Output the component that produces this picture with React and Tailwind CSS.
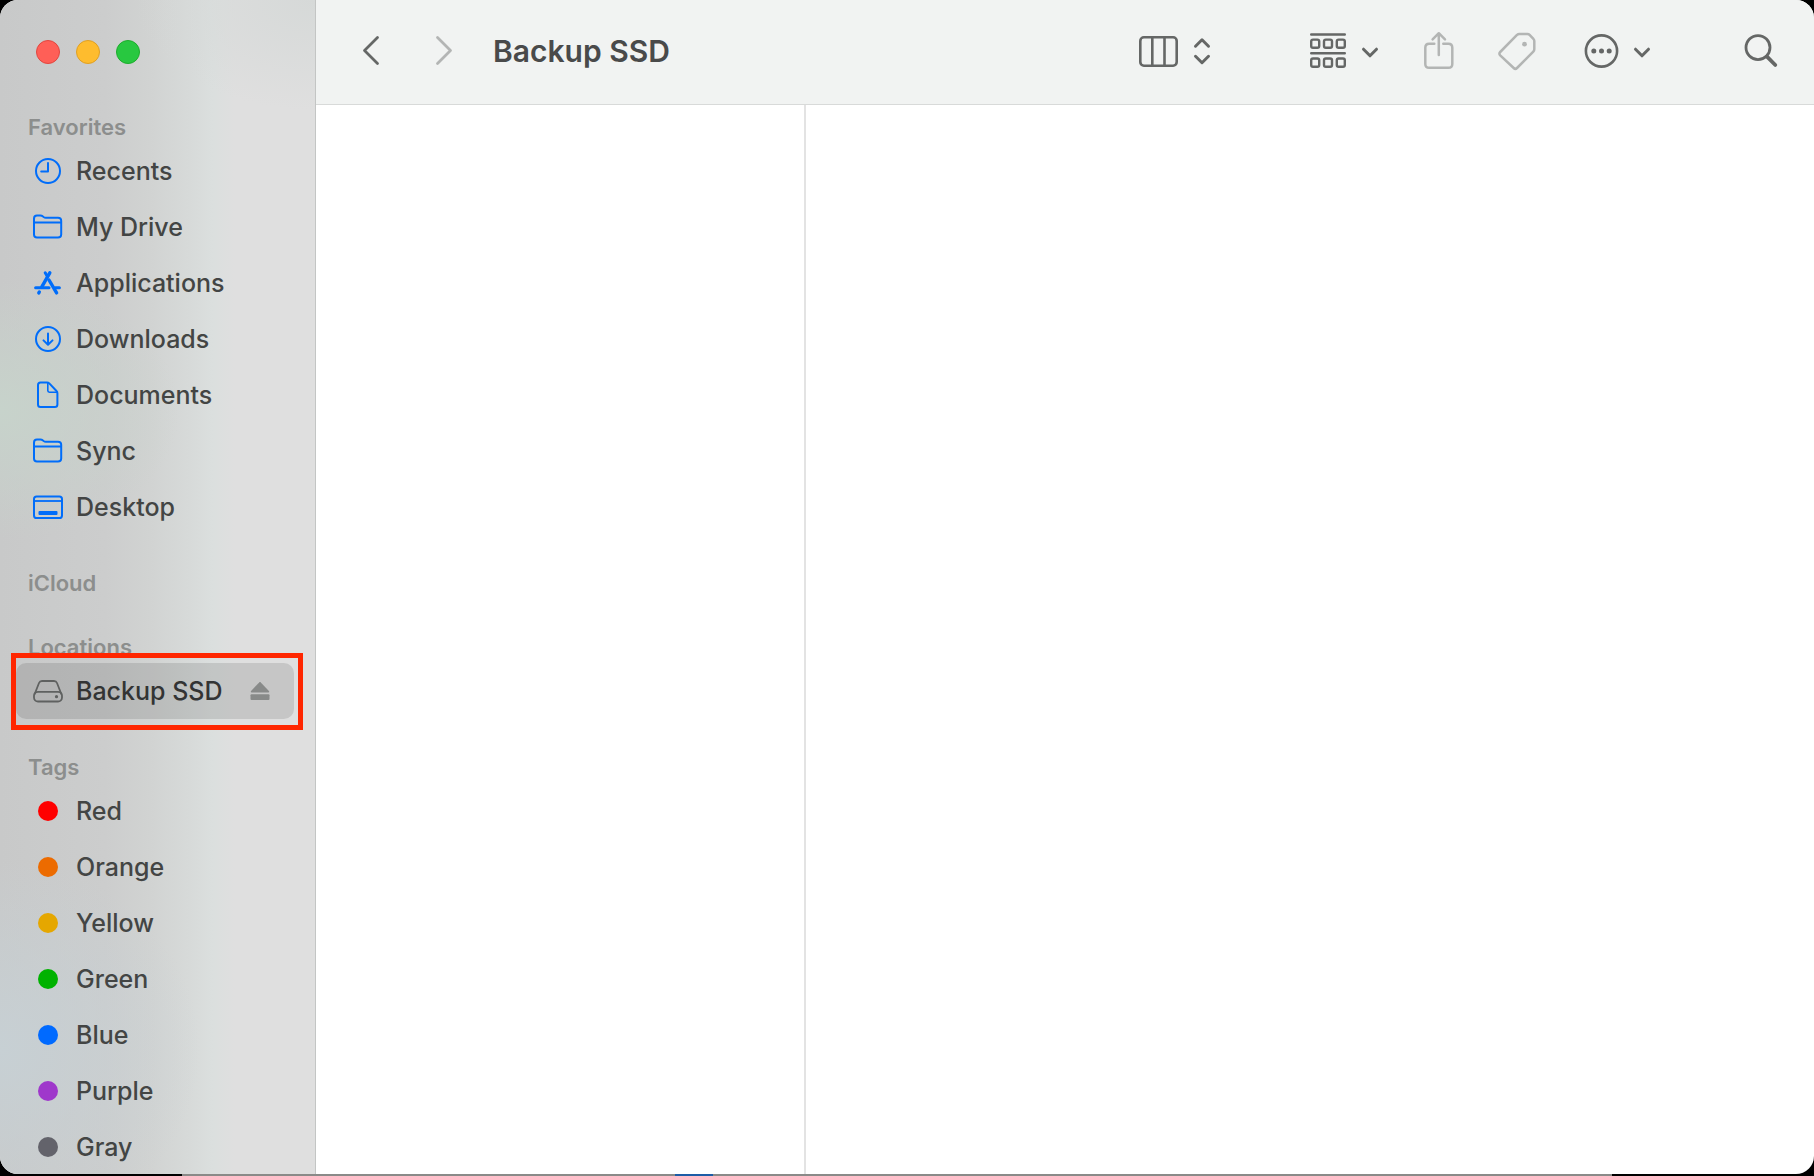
import clsx from 'clsx';

const RecentsIcon = () => (
  <svg width="32" height="32" viewBox="0 0 32 32" fill="none" stroke="currentColor" strokeWidth="2" strokeLinecap="round" strokeLinejoin="round">
    <circle cx="16" cy="16" r="12" />
    <path d="M16 8v8.4H9.2" />
  </svg>
);

const FolderIcon = () => (
  <svg width="32" height="32" viewBox="0 0 32 32" fill="none" stroke="currentColor" strokeWidth="2" strokeLinejoin="round">
    <path d="M2 23.500V7.700C2 5.500 3 4.500 5 4.500h3.400c1 0 1.600.2 2.300.8l.9.700c.7.500 1.200.700 2.200.700h12.200c2.200 0 3.200 1 3.200 3V23.500c0 2-1 3-3.200 3H5c-2 0-3-1-3-3z" />
    <path d="M2 11.500h27.200" />
  </svg>
);

const AppsIcon = () => (
  <svg width="32" height="32" viewBox="0 0 32 32" fill="none" stroke="currentColor" strokeWidth="3" strokeLinecap="round">
    <path d="M13.200 5.800l1.800 3" />
    <path d="M17.800 5.800L9.800 19.800" strokeWidth="3.400" />
    <path d="M3.600 20.700h13.400" />
    <path d="M23.400 20.700h4" />
    <path d="M7.300 25l-.5.900" strokeWidth="3.400" />
    <path d="M17 13l7.600 12.900" strokeWidth="3.400" />
  </svg>
);

const DownloadsIcon = () => (
  <svg width="32" height="32" viewBox="0 0 32 32" fill="none" stroke="currentColor" strokeWidth="2" strokeLinecap="round" strokeLinejoin="round">
    <circle cx="16" cy="16" r="12" />
    <path d="M16 10.500v11M11.500 17.400l4.500 4.300 4.500-4.300" />
  </svg>
);

const DocumentIcon = () => (
  <svg width="32" height="32" viewBox="0 0 32 32" fill="none" stroke="currentColor" strokeWidth="2" strokeLinejoin="round">
    <path d="M6 6c0-1.700.8-2.500 2.500-2.500H15c1 0 1.600.2 2.300.9l7.200 7.600c.7.700.9 1.300.9 2.200V25.500c0 1.700-.9 2.500-2.600 2.500H8.500C6.800 28 6 27.200 6 25.500z" />
    <path d="M15.800 4v7.600c0 1.100.6 1.600 1.600 1.600h7.600" strokeWidth="1.600" />
  </svg>
);

const DesktopIcon = () => (
  <svg width="32" height="32" viewBox="0 0 32 32" fill="none" stroke="currentColor" strokeWidth="2">
    <rect x="2" y="5.500" width="28" height="21.500" rx="2.600" />
    <path d="M2 10h28" strokeWidth="1.800" />
    <rect x="6.500" y="20" width="19" height="4" rx="1" fill="currentColor" stroke="none" />
  </svg>
);

const DriveIcon = () => (
  <svg width="32" height="32" viewBox="0 0 32 32" fill="none" stroke="currentColor" strokeWidth="1.800" strokeLinejoin="round">
    <path d="M2.500 19.500L7 8c.6-1.500 1.500-2 3-2h12c1.500 0 2.400.5 3 2l4.500 11.500" />
    <rect x="2" y="16.800" width="28" height="9.700" rx="4" />
    <circle cx="24.500" cy="21.700" r="1.600" fill="currentColor" stroke="none" />
  </svg>
);

const EjectIcon = () => (
  <svg width="20" height="20" viewBox="0 0 20 20" fill="currentColor">
    <path d="M9.200 1.400c.5-.5 1.100-.5 1.600 0l8.100 8.500c.6.700.4 1.500-.6 1.500H1.700c-1 0-1.200-.8-.6-1.500z" />
    <rect x=".5" y="13.200" width="19" height="5.800" rx="1" />
  </svg>
);

const ChevronDown = () => (
  <svg width="18" height="36" viewBox="0 0 18 36" fill="none" stroke="currentColor" strokeWidth="3" strokeLinecap="round" strokeLinejoin="round">
    <path d="M2.500 16.200l6.500 6.600 6.500-6.600" />
  </svg>
);

const favorites = [
  { name: 'Recents', icon: RecentsIcon },
  { name: 'My Drive', icon: FolderIcon },
  { name: 'Applications', icon: AppsIcon },
  { name: 'Downloads', icon: DownloadsIcon },
  { name: 'Documents', icon: DocumentIcon },
  { name: 'Sync', icon: FolderIcon },
  { name: 'Desktop', icon: DesktopIcon },
];

const tags = [
  { name: 'Red', color: 'bg-[#ff0000]' },
  { name: 'Orange', color: 'bg-[#ec6b00]' },
  { name: 'Yellow', color: 'bg-[#e5a700]' },
  { name: 'Green', color: 'bg-[#00b200]' },
  { name: 'Blue', color: 'bg-[#006aff]' },
  { name: 'Purple', color: 'bg-[#9f38cb]' },
  { name: 'Gray', color: 'bg-[#63636b]' },
];

function SectionTitle({ children }) {
  return (
    <h2 className="flex h-[34px] items-center pt-0.5 pl-7 text-[22px] font-semibold text-[#8c8e8d]">
      {children}
    </h2>
  );
}

function SidebarLink({ label, children }) {
  return (
    <a href="#" className="flex h-14 items-center gap-3 pl-4 text-[25px] font-medium text-[#434544]">
      <span className="flex w-8 justify-center text-[#006dfa]">{children}</span>
      <span className="pt-0.5">{label}</span>
    </a>
  );
}

function Sidebar() {
  return (
    <aside className="flex w-[316px] shrink-0 flex-col overflow-hidden border-r border-[#c3c5c4] bg-[radial-gradient(ellipse_180px_130px_at_0px_410px,#c7d3cb,transparent),radial-gradient(ellipse_200px_190px_at_0px_1050px,#c7d0d4,transparent),radial-gradient(ellipse_180px_110px_at_315px_0px,#d6d9d8,transparent),linear-gradient(to_right,#c8c9c9_0px,#cccdcd_105px,#d1d3d2_150px,#d7dad9_190px,#dbdfde_213px,#dfdfdf_235px)]">
      <div className="flex h-[104px] shrink-0 items-center gap-4 pl-9">
        <button aria-label="Close" className="size-6 rounded-full border border-[#e2463f] bg-[#ff5f57]" />
        <button aria-label="Minimize" className="size-6 rounded-full border border-[#e0a023] bg-[#febc2e]" />
        <button aria-label="Zoom" className="size-6 rounded-full border border-[#1dad2c] bg-[#28c840]" />
      </div>

      <nav className="flex flex-col gap-[30px] pt-[5px]">
        <section>
          <SectionTitle>Favorites</SectionTitle>
          <div className="mx-4">
            {favorites.map(({ name, icon: Icon }) => (
              <SidebarLink key={name} label={name}>
                <Icon />
              </SidebarLink>
            ))}
          </div>
        </section>

        <section>
          <SectionTitle>iCloud</SectionTitle>
        </section>

        <section>
          <SectionTitle>Locations</SectionTitle>
          <div className="relative mr-[21px] ml-4 flex h-14 items-center rounded-[10px] bg-black/11">
            <a href="#" className="flex flex-1 items-center gap-3 pl-4 text-[25px] font-medium text-[#333434]">
              <span className="w-8 text-[#5f6160]">
                <DriveIcon />
              </span>
              <span className="pt-0.5">Backup SSD</span>
            </a>
            <button aria-label="Eject Backup SSD" className="mr-6 text-[#888a89]">
              <EjectIcon />
            </button>
            {/* Highlight frame */}
            <div className="pointer-events-none absolute -top-2.5 -right-[9px] -bottom-[11px] -left-[5px] border-[5px] border-[#ff2600]" />
          </div>
        </section>

        <section>
          <SectionTitle>Tags</SectionTitle>
          <div className="mx-4">
            {tags.map((tag) => (
              <SidebarLink key={tag.name} label={tag.name}>
                <span className={clsx('size-5 rounded-full', tag.color)} />
              </SidebarLink>
            ))}
          </div>
        </section>
      </nav>
    </aside>
  );
}

function Toolbar() {
  return (
    <header className="flex h-[105px] shrink-0 items-center border-b border-[#d8dad9] bg-[#f1f3f2] pr-9 pb-0.5 pl-[45px] text-[#656766]">
      <button aria-label="Back">
        <svg width="20" height="36" viewBox="0 0 20 36" fill="none" stroke="currentColor" strokeWidth="2.800" strokeLinecap="round" strokeLinejoin="round">
          <path d="M16.500 4.500L3.500 17.500l13 13" />
        </svg>
      </button>
      <button aria-label="Forward" className="ml-[52px] text-[#b3b5b4]">
        <svg width="20" height="36" viewBox="0 0 20 36" fill="none" stroke="currentColor" strokeWidth="2.800" strokeLinecap="round" strokeLinejoin="round">
          <path d="M4.500 4.500l13 13-13 13" />
        </svg>
      </button>
      <h1 className="ml-10 text-[30px] font-semibold text-[#494a4a]">Backup SSD</h1>

      <button aria-label="Column view" className="ml-auto flex items-center gap-3.5">
        <svg width="40" height="36" viewBox="0 0 40 36" fill="none" stroke="currentColor" strokeWidth="2.600">
          <rect x="1.300" y="4.300" width="36.400" height="28.400" rx="3.600" />
          <path d="M13.300 4.500v28M25.500 4.500v28" />
        </svg>
        <svg width="18" height="36" viewBox="0 0 18 36" fill="none" stroke="currentColor" strokeWidth="3" strokeLinecap="round" strokeLinejoin="round">
          <path d="M2.500 13.200L9 6.800l6.500 6.400M2.500 23.300L9 29.700l6.500-6.400" />
        </svg>
      </button>

      <button aria-label="Group items" className="ml-[98px] flex items-center gap-3.5">
        <svg width="38" height="36" viewBox="0 0 38 36" fill="none" stroke="currentColor" strokeWidth="2.400" strokeLinecap="round">
          <path d="M2.200 1.500h33.600M2.200 20.200h33.600" />
          <rect x="2.200" y="6.600" width="8" height="8.200" rx="1.800" />
          <rect x="15" y="6.600" width="8" height="8.200" rx="1.800" />
          <rect x="27.800" y="6.600" width="8" height="8.200" rx="1.800" />
          <rect x="2.200" y="25.500" width="8" height="8.200" rx="1.800" />
          <rect x="15" y="25.500" width="8" height="8.200" rx="1.800" />
          <rect x="27.800" y="25.500" width="8" height="8.200" rx="1.800" />
        </svg>
        <ChevronDown />
      </button>

      <button aria-label="Share" className="ml-11 text-[#b3b5b4]">
        <svg width="32" height="40" viewBox="0 0 32 40" fill="none" stroke="currentColor" strokeWidth="2.500" strokeLinecap="round" strokeLinejoin="round">
          <path d="M11.300 12.800H6.200c-2.500 0-3.900 1.400-3.900 3.900v16.200c0 2.500 1.400 3.900 3.900 3.900h19.200c2.500 0 3.900-1.400 3.900-3.900V16.700c0-2.500-1.400-3.900-3.900-3.900h-5.100" />
          <path d="M15.800 24V2.500M9.600 8.300l6.200-6.100L22 8.300" />
        </svg>
      </button>

      <button aria-label="Edit tags" className="ml-[42px] text-[#b3b5b4]">
        <svg width="40" height="40" viewBox="0 0 40 40" fill="none" stroke="currentColor" strokeWidth="2.500" strokeLinejoin="round">
          <path d="M22.300 3h8.100c1 0 1.600.3 2.200.9l3.800 4c.7.700.9 1.300.9 2.200v8.200c0 1-.3 1.600-1 2.300L20 37c-1.100 1.100-2.200 1.100-3.300 0L3.200 24.300c-1.100-1.100-1.100-2.200 0-3.300L20 3.900c.7-.6 1.300-.9 2.300-.9z" />
          <circle cx="27.500" cy="13.200" r="2.400" fill="currentColor" stroke="none" />
        </svg>
      </button>

      <button aria-label="More actions" className="ml-[46px] flex items-center gap-3.5">
        <svg width="36" height="36" viewBox="0 0 36 36" fill="none" stroke="currentColor" strokeWidth="2.600">
          <circle cx="18.500" cy="18" r="15.600" />
          <g fill="currentColor" stroke="none">
            <circle cx="10.800" cy="18" r="2.500" />
            <circle cx="18.500" cy="18" r="2.500" />
            <circle cx="26.200" cy="18" r="2.500" />
          </g>
        </svg>
        <ChevronDown />
      </button>

      <button aria-label="Search" className="ml-[91px]">
        <svg width="36" height="36" viewBox="0 0 36 36" fill="none" stroke="currentColor" strokeWidth="2.800" strokeLinecap="round">
          <circle cx="16" cy="14.600" r="12" />
          <path d="M25 23.600l8.300 8.400" strokeWidth="3.800" />
        </svg>
      </button>
    </header>
  );
}

export default function App() {
  return (
    <div className="flex h-screen flex-col bg-black font-[Inter,'Noto_Sans',sans-serif]">
      <div className="flex min-h-0 flex-1 overflow-hidden rounded-[18px] bg-white">
        <Sidebar />
        <div className="flex min-w-0 flex-1 flex-col">
          <Toolbar />
          <main className="flex flex-1">
            <div className="w-[490px] border-r-2 border-[#e3e3e3]" />
            <div className="flex-1" />
          </main>
        </div>
      </div>

      {/* Sliver of the desktop under the window */}
      <div className="flex h-0.5 shrink-0">
        <div className="w-[182px]" />
        <div className="w-[493px] bg-[#8a8a88]" />
        <div className="w-[38px] bg-[#1d5ca6]" />
        <div className="flex-1 bg-[#8a8a88]" />
        <div className="w-[202px]" />
      </div>
    </div>
  );
}
